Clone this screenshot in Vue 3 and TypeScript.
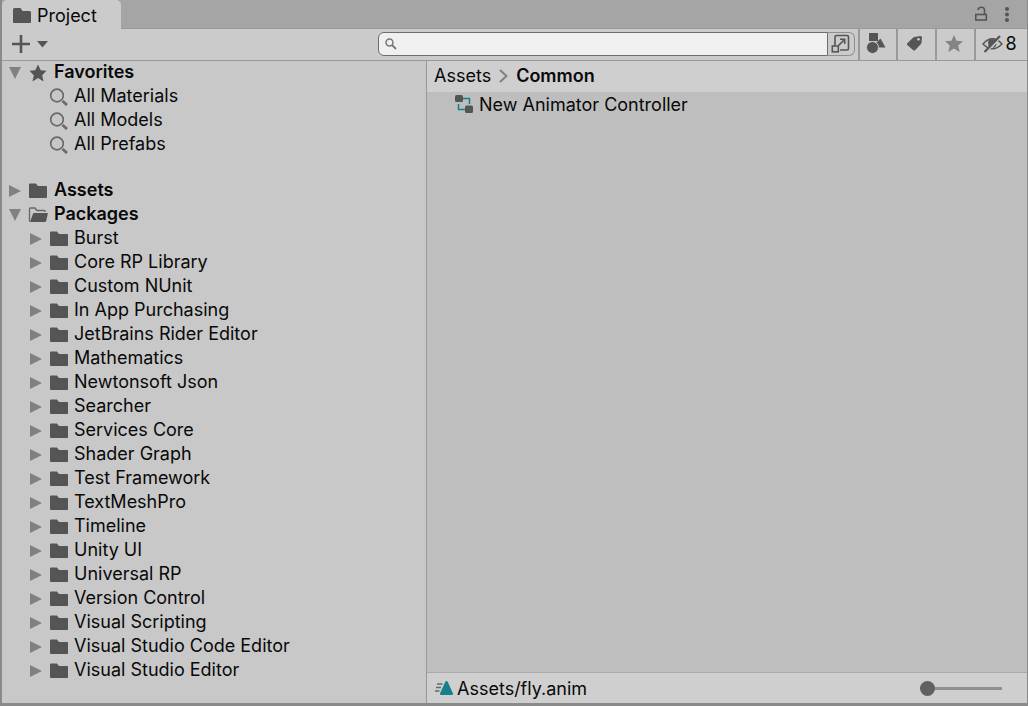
<script setup lang="ts">
import { computed, ref } from 'vue'

type IconName = 'star' | 'search' | 'folder' | 'folder-open'

interface TreeNode {
  name: string
  icon: IconName
  root?: boolean
  open?: boolean
  children?: string[]
}

const favorites = ref<TreeNode>({
  name: 'Favorites',
  icon: 'star',
  open: true,
  children: ['All Materials', 'All Models', 'All Prefabs'],
})

const assets = ref<TreeNode>({ name: 'Assets', icon: 'folder', open: false })

const packages = ref<TreeNode>({
  name: 'Packages',
  icon: 'folder-open',
  open: true,
  children: [
    'Burst',
    'Core RP Library',
    'Custom NUnit',
    'In App Purchasing',
    'JetBrains Rider Editor',
    'Mathematics',
    'Newtonsoft Json',
    'Searcher',
    'Services Core',
    'Shader Graph',
    'Test Framework',
    'TextMeshPro',
    'Timeline',
    'Unity UI',
    'Universal RP',
    'Version Control',
    'Visual Scripting',
    'Visual Studio Code Editor',
    'Visual Studio Editor',
  ],
})

const query = ref('')
const zoom = ref(0)
const items = ['New Animator Controller']
const visibleItems = computed(() =>
  items.filter((item) => item.toLowerCase().includes(query.value.toLowerCase())),
)
</script>

<template>
  <div class="window">
    <header class="tabbar">
      <button class="tab" type="button">
        <svg class="tab-icon" width="18" height="16" viewBox="0 0 18 16"><path d="M0 1.5Q0 0 1.5 0H7.5L9.5 3H16.500Q18 3 18 4.500V14Q18 15 17 15H1Q0 15 0 14Z" fill="#555" /></svg>
        <span>Project</span>
      </button>
      <div class="tab-actions">
        <button type="button" aria-label="Lock">
          <svg width="14" height="18" viewBox="0 0 14 18" fill="none" stroke="#555" stroke-width="1.600"><rect x="1.800" y="8.500" width="10.500" height="5.500" /><path d="M4 4C4.500 .500 10.500 .200 10.500 4V8.500" /></svg>
        </button>
        <button type="button" aria-label="Window menu">
          <svg width="6" height="18" viewBox="0 0 6 18" fill="#555"><circle cx="3" cy="3" r="2" /><circle cx="3" cy="8.500" r="2" /><circle cx="3" cy="14" r="2" /></svg>
        </button>
      </div>
    </header>

    <div class="toolbar">
      <button class="add" type="button" aria-label="Create">
        <svg width="36" height="18" viewBox="0 0 36 18"><path d="M9 0V18M0 9H18" stroke="#555" stroke-width="2.600" /><path d="M26 6H37L31.500 12.500Z" transform="translate(-1 0)" fill="#555" /></svg>
      </button>
      <div class="search">
        <label class="field">
          <svg width="12" height="12" viewBox="0 0 12 12" fill="none" stroke="#777"><circle cx="4.500" cy="4.500" r="3.500" stroke-width="1.500" /><path d="M7 7L11 11" stroke-width="1.800" /></svg>
          <input v-model="query" type="text" aria-label="Search assets" />
        </label>
        <button class="expand" type="button" aria-label="Open in search window">
          <svg width="20" height="20" viewBox="0 0 20 20" fill="none" stroke="#555" stroke-width="1.600"><path d="M4 11.500V3Q4 1.500 5.500 1.500H16Q17.500 1.500 17.500 3V14.500Q17.500 16 16 16H9" /><rect x="1.300" y="12" width="6" height="5.800" /><path d="M7.500 11.500L13.500 5.500M9 5.300H13.700V10" /></svg>
        </button>
      </div>
      <button class="tool type" type="button" aria-label="Search by type">
        <svg width="20" height="21" viewBox="0 0 20 21" fill="#555"><path d="M3 0H12V8H3Z" /><path d="M14.500 5.500L19.500 14.500H13L10.500 9.500Z" /><circle cx="6.500" cy="14.500" r="6" stroke="#cbcbcb" /></svg>
      </button>
      <button class="tool label" type="button" aria-label="Search by label">
        <svg width="17" height="17" viewBox="0 0 17 17"><path d="M8.500 2L14.500 1Q16 1 16 2.500L15.500 7.500Q15.500 8.500 14.500 9.500L9 15.200Q8 16 7 15L1.300 10Q.500 9 1.300 8.200L7 2.700Q7.500 2.100 8.500 2Z" fill="#555" /><circle cx="12.500" cy="4.300" r="1.300" fill="#cbcbcb" /></svg>
      </button>
      <button class="tool save" type="button" aria-label="Save search">
        <svg width="18" height="17" viewBox="0 0 18 17"><path d="M9 0L11.500 5.800L18 6.300L13.200 10.500L14.700 17L9 13.500L3.300 17L4.800 10.500L0 6.300L6.500 5.800Z" fill="#848484" /></svg>
      </button>
      <button class="tool hidden" type="button" aria-label="Hidden packages">
        <svg width="21" height="18" viewBox="0 0 21 18" fill="none" stroke="#555"><path d="M1 9Q10.500-1.500 20 9Q10.500 18.500 1 9Z" stroke-width="1.400" /><path d="M6 8Q6 4 10.500 4Q13.500 4 14 6L8 13Q6 10.500 6 8ZM14.500 8Q14.500 12.500 10.500 13Z" fill="#555" stroke="none" /><path d="M4 17.500L19 2" stroke="#cbcbcb" stroke-width="1.500" /><path d="M2.500 17L18 1" stroke-width="2.200" /></svg>
        <span>8</span>
      </button>
    </div>

    <div class="body">
      <nav class="tree" aria-label="Project folders">
        <section v-for="node in [favorites, assets, packages]" :key="node.name" class="branch">
          <button class="row root" type="button" :aria-expanded="node.open" @click="node.open = !node.open">
            <svg class="arrow" width="12" height="14" viewBox="0 0 12 14" fill="#808080">
              <path v-if="node.open" d="M0 1H12L6 13Z" /><path v-else d="M0 1L12 7L0 13Z" />
            </svg>
            <svg v-if="node.icon === 'star'" class="icon" width="20" height="18" viewBox="0 0 20 18"><path d="M10 .500L12.700 6.300L18.500 6.800L14.200 11.200L15.500 17.500L10 14L4.500 17.500L5.800 11.200L1.500 6.800L7.300 6.300Z" fill="#555" /></svg>
            <svg v-else-if="node.icon === 'folder-open'" class="icon" width="20" height="16" viewBox="0 0 20 16"><path d="M1.500 14.500V2Q1.500 1 2.500 1H7L9 3.500H16Q17.300 3.500 17.300 5" fill="none" stroke="#666" stroke-width="1.300" /><path d="M6 6H19.500Q20 6 19.800 6.700L18.200 14Q17.900 15 16.900 15H2L5 6.800Q5.300 6 6 6Z" fill="#555" /></svg>
            <svg v-else class="icon" width="20" height="16" viewBox="0 0 20 16"><path d="M1 1.500Q1 .500 2 .500H8L10 3H18Q19 3 19 4V14Q19 15 18 15H2Q1 15 1 14Z" fill="#555" /></svg>
            <span class="name">{{ node.name }}</span>
          </button>
          <ul v-if="node.open && node.children" class="children">
            <li v-for="child in node.children" :key="child">
              <button class="row" type="button">
                <svg class="arrow" width="12" height="14" viewBox="0 0 12 14" fill="#808080">
                  <path v-if="node.icon !== 'star'" d="M0 1L12 7L0 13Z" />
                </svg>
                <svg v-if="node.icon === 'star'" class="icon" width="20" height="18" viewBox="0 0 20 18" fill="none" stroke="#6a6a6a"><circle cx="8" cy="7.500" r="6.300" stroke-width="1.700" /><path d="M13.500 13L18 17" stroke-width="2.800" /></svg>
                <svg v-else class="icon" width="20" height="16" viewBox="0 0 20 16"><path d="M1 1.500Q1 .500 2 .500H8L10 3H18Q19 3 19 4V14Q19 15 18 15H2Q1 15 1 14Z" fill="#555" /></svg>
                <span class="name">{{ child }}</span>
              </button>
            </li>
          </ul>
        </section>
      </nav>

      <main class="browser">
        <nav class="crumbs" aria-label="Breadcrumb">
          <a href="#assets">Assets</a>
          <svg width="9" height="14" viewBox="0 0 9 14"><path d="M1 1L7.500 7L1 13" fill="none" stroke="#808080" stroke-width="2" /></svg>
          <a class="current" href="#common">Common</a>
        </nav>
        <ul class="items">
          <li v-for="item in visibleItems" :key="item">
            <button class="item" type="button">
              <svg width="18" height="18" viewBox="0 0 18 18"><path d="M8 3.500H14.500V9M3.500 9V14.500H10" fill="none" stroke="#16808c" stroke-width="1.500" /><rect width="8" height="7" rx="1.500" fill="#555" /><rect x="10" y="10.500" width="8" height="7.500" rx="1.500" fill="#555" /></svg>
              <span>{{ item }}</span>
            </button>
          </li>
        </ul>
        <footer class="status">
          <svg width="18" height="14" viewBox="0 0 18 14"><path d="M11.500 0Q12.300 0 12.800 1L17.800 12Q18.500 14 17 14H6Q4.500 14 5.200 12L10.200 1Q10.700 0 11.500 0Z" fill="#16808c" /><path d="M2 3H7.500M1 6.500H6M0 10H4.500" stroke="#666" stroke-width="1.500" /></svg>
          <span class="path">Assets/fly.anim</span>
          <input v-model.number="zoom" class="zoom" type="range" min="0" max="100" aria-label="Icon size" />
        </footer>
      </main>
    </div>
  </div>
</template>

<style>
body {
  margin: 0;
  background: #8a8a8a;
}
</style>

<style scoped>
* {
  box-sizing: border-box;
}

.window {
  display: flex;
  flex-direction: column;
  min-height: 100vh;
  border: solid #8a8a8a;
  border-width: 0 1px 3px 2px;
  background: #c8c8c8;
  color: #090909;
  font: 18px/24px Inter, "Liberation Sans", sans-serif;
  font-optical-sizing: none;
}

button {
  display: flex;
  align-items: center;
  margin: 0;
  padding: 0;
  border: 0;
  background: none;
  color: inherit;
  font: inherit;
  font-optical-sizing: inherit;
  text-align: left;
}

svg {
  display: block;
  flex: none;
}

ul {
  margin: 0;
  padding: 0;
  list-style: none;
}

.tabbar {
  display: flex;
  justify-content: space-between;
  height: 29px;
  background: #a5a5a5;
  box-shadow: inset 0 -1px #999;
}

.tab {
  gap: 6px;
  padding: 2px 24px 0 11px;
  border-radius: 5px 5px 0 0;
  background: #cbcbcb;
}

.tab-actions {
  display: flex;
  align-items: center;
  gap: 16px;
  padding-right: 17px;
}

.toolbar {
  display: flex;
  height: 32px;
  border-bottom: 1px solid #999;
  background: #cbcbcb;
}

.add {
  padding: 0 0 2px 10px;
}

.search {
  display: flex;
  flex: 0 1 477px;
  height: 24px;
  margin: 3px 3px 0 auto;
}

.field {
  display: flex;
  flex: 1;
  align-items: center;
  gap: 4px;
  padding-left: 6px;
  border: 1px solid #6e6e6e;
  border-radius: 6px 0 0 6px;
  background: #f0f0f0;
}

.field input {
  flex: 1;
  min-width: 0;
  padding: 0;
  border: 0;
  outline: 0;
  background: none;
  font: inherit;
}

.expand {
  width: 27px;
  padding-left: 3px;
  border: 1px solid #8f8f8f;
  border-left: 0;
  border-radius: 0 6px 6px 0;
}

.tool {
  justify-content: center;
  padding: 0 4px 2px 0;
  border-left: 2px solid #999;
}

.type {
  width: 38px;
}

.label,
.save {
  width: 39px;
}

.hidden {
  gap: 2px;
  width: 53px;
}

.body {
  display: grid;
  flex: 1;
  grid-template-columns: 424px 1fr;
}

.tree {
  padding-bottom: 20px;
}

.branch:first-child {
  padding-bottom: 22px;
}

.row {
  width: 100%;
  height: 24px;
  padding-left: 7px;
}

.children .row {
  padding-left: 28px;
}

.arrow {
  margin-right: 7px;
}

.icon {
  margin-right: 5px;
}

.name {
  padding-bottom: 2px;
}

.root {
  font-weight: 600;
}

.root .icon {
  margin-right: 6px;
}

.browser {
  display: flex;
  flex-direction: column;
  border-left: 1px solid #999;
  background: #bebebe;
}

.crumbs {
  display: flex;
  align-items: center;
  gap: 8px;
  height: 31px;
  padding: 0 7px 2px;
  background: #cfcfcf;
}

.crumbs a {
  color: inherit;
  text-decoration: none;
}

.crumbs .current {
  font-weight: 600;
}

.items {
  flex: 1;
}

.item {
  gap: 6px;
  width: 100%;
  height: 24px;
  padding-left: 28px;
}

.item span {
  padding-top: 2px;
}

.status {
  display: flex;
  align-items: center;
  height: 31px;
  padding: 0 25px 0 8px;
  border-top: 1px solid #aaa;
  background: #cfcfcf;
}

.path {
  padding: 2px 0 0 4px;
}

.zoom {
  width: 82px;
  height: 16px;
  margin: 0 0 0 auto;
  appearance: none;
  background: none;
}

.zoom::-webkit-slider-runnable-track {
  height: 3px;
  background: #8f8f8f;
}

.zoom::-webkit-slider-thumb {
  width: 15px;
  height: 15px;
  margin-top: -6px;
  appearance: none;
  border-radius: 50%;
  background: #616161;
}
</style>
